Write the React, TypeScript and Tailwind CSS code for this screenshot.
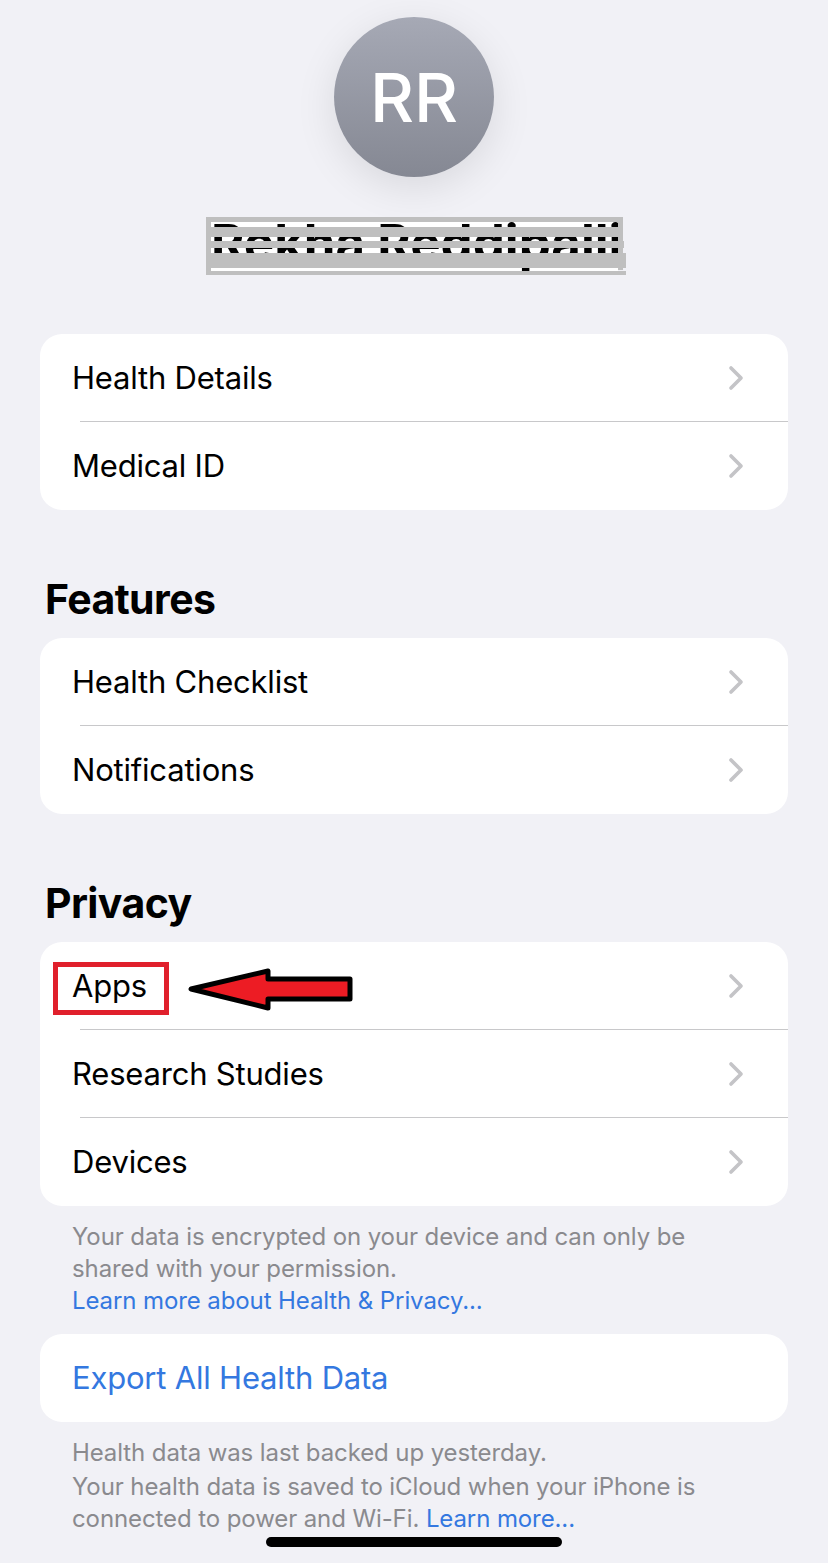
import { ChevronRight } from "lucide-react";

const Row = ({ label, blue, last }: { label: string; blue?: boolean; last?: boolean }) => (
  <div className="relative flex h-[88px] items-center justify-between pl-[33px] pr-[32px]">
    <span className={`-ml-px text-[31px] tracking-[-0.2px] ${blue ? "text-[#3478e0]" : "text-black"}`}>{label}</span>
    {!blue && <ChevronRight size={40} strokeWidth={2.2} className="text-[#c4c4c7]" />}
    {!last && <div className="absolute bottom-0 left-[40px] right-0 h-px bg-[#c8c8ca]" />}
  </div>
);

const Card = ({ children }: { children: React.ReactNode }) => (
  <div className="mx-10 overflow-hidden rounded-[22px] bg-white">{children}</div>
);

const Heading = ({ children }: { children: string }) => (
  <h2 className="mb-[15px] ml-[45px] text-[41px] font-bold leading-[48px] tracking-[-0.6px] text-black">{children}</h2>
);

export default function App() {
  return (
    <div className="relative h-[1563px] w-[828px] overflow-hidden bg-[#f1f1f6] font-['Inter',sans-serif]">
      <div className="flex justify-center pt-[17px]">
        <div className="flex h-40 w-40 items-center justify-center rounded-full bg-gradient-to-b from-[#a6a9b5] to-[#858893] text-[68px] font-[550] text-white shadow-[0_10px_40px_rgba(0,0,0,0.1)]">
          RR
        </div>
      </div>

      {/* redacted name */}
      <div className="relative ml-[206px] mt-10 h-[58px] w-[420px]">
        <div className="ml-[5px] h-full w-[407px] bg-white">
          <div className="whitespace-nowrap text-center text-[51px] font-bold leading-[52px] text-black">
            Rekha Reddipalli
          </div>
        </div>
        <div className="absolute left-0 top-0 h-full w-[5px] bg-[#bfbfbf]" />
        <div className="absolute left-[412px] top-0 h-[53px] w-[5px] bg-[#bfbfbf]" />
        <div className="absolute left-0 top-0 h-[5px] w-[417px] bg-[#bfbfbf]" />
        <div className="absolute left-0 top-[10px] h-[10px] w-[417px] bg-[#bfbfbf]" />
        <div className="absolute left-0 top-[24px] h-[7px] w-[418px] bg-[#bfbfbf]" />
        <div className="absolute left-0 top-[36px] h-[15px] w-[420px] bg-[#bfbfbf]" />
        <div className="absolute bottom-0 left-0 h-[4px] w-[420px] bg-[#bfbfbf]" />
      </div>

      <div className="mt-[59px]">
        <Card>
          <Row label="Health Details" />
          <Row label="Medical ID" last />
        </Card>
      </div>

      <div className="mt-[65px]">
        <Heading>Features</Heading>
        <Card>
          <Row label="Health Checklist" />
          <Row label="Notifications" last />
        </Card>
      </div>

      <div className="mt-[65px]">
        <Heading>Privacy</Heading>
        <div className="relative">
          <Card>
            <Row label="Apps" />
            <Row label="Research Studies" />
            <Row label="Devices" last />
          </Card>
          {/* annotation */}
          <div className="absolute left-[53px] top-[20px] h-[53px] w-[116px] border-[5px] border-[#e0202c]" />
          <svg className="absolute left-[186px] top-[24px]" width="170" height="46" viewBox="0 0 170 46">
            <path
              d="M5 23 L82 5 L82 13 L164 13 L164 33 L82 33 L82 42 Z"
              fill="#ed1c24"
              stroke="#000"
              strokeWidth="5"
              strokeLinejoin="round"
            />
          </svg>
        </div>
      </div>

      <p className="mt-[15px] pl-[72px] pr-10 text-[24px] leading-[32px] tracking-[-0.1px] text-[#8a8a8e]">
        Your data is encrypted on your device and can only be
        <br />
        shared with your permission.
        <br />
        <span className="text-[#3478e0]">Learn more about Health &amp; Privacy...</span>
      </p>

      <div className="mt-[17px]">
        <Card>
          <Row label="Export All Health Data" blue last />
        </Card>
      </div>

      <div className="mt-[15px] pl-[72px] pr-10 text-[24px] leading-[32px] tracking-[-0.1px] text-[#8a8a8e]">
        <p className="mb-[2px]">Health data was last backed up yesterday.</p>
        <p>
          Your health data is saved to iCloud when your iPhone is
          <br />
          connected to power and Wi-Fi. <span className="text-[#3478e0]">Learn more...</span>
        </p>
      </div>

      {/* home indicator */}
      <div className="absolute bottom-[16px] left-[266px] h-[10px] w-[296px] rounded-full bg-black" />
    </div>
  );
}
